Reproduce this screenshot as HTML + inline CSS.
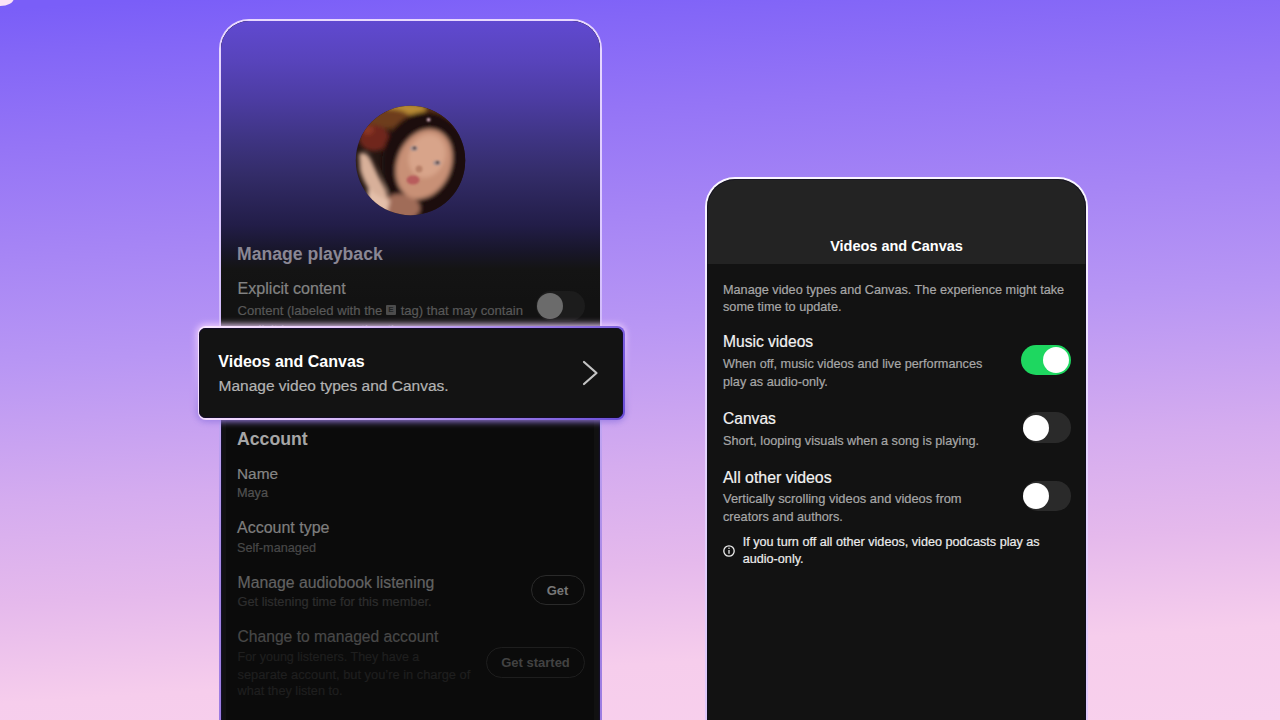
<!DOCTYPE html>
<html><head><meta charset="utf-8">
<style>
html,body{margin:0;padding:0;overflow:hidden;}
body{width:1280px;height:720px;overflow:hidden;position:relative;font-family:"Liberation Sans",sans-serif;
background:linear-gradient(176.5deg,#7a5ef8 1.1%,#8366f7 6.7%,#9474f6 18%,#b896f4 45.6%,#d5acef 63.1%,#e5b9ec 75.6%,#f6cdec 88.1%,#f8d0ec 100%);}
.t{position:absolute;white-space:nowrap;-webkit-text-stroke:0.2px currentColor;}
.b{-webkit-text-stroke:0;}
.tr{position:absolute;}
.kn{position:absolute;border-radius:50%;}
.abs{position:absolute;}
</style></head><body>
<div class="abs" style="left:-14px;top:-10px;width:28px;height:16px;border-radius:50%;background:#fbe2f6;filter:blur(0.6px)"></div>
<div class="abs" style="left:219px;top:19px;width:383px;height:760px;border-radius:30px;background:linear-gradient(180deg,#e8d8ff 0%,#dcc8ff 30%,#c4aaf4 50%,#a484e4 75%,#9878e0 100%);"></div>
<div class="abs" style="left:221px;top:21px;width:379px;height:756px;border-radius:28px;background:#111111;box-shadow:inset 0 0 0 1.2px rgba(24,14,64,0.55);overflow:hidden;">
<div class="abs" style="left:0;top:0;width:379px;height:400px;background:linear-gradient(180deg,#6049d0 0px,#5844bc 39px,#4c3ca2 79px,#3e3482 119px,#332c68 154px,#221d48 204px,#18162a 230px,#141414 248px,#121212 280px);"></div>
<div class="abs" style="left:5px;top:399px;width:368px;height:400px;background:#0b0b0b;"></div>
</div>
<div class="t b" style="left:237.00px;top:246.40px;font-size:17.6px;line-height:17.6px;color:#8a8794;font-weight:700;">Manage playback</div>
<div class="t" style="left:237.50px;top:280.47px;font-size:16.1px;line-height:16.1px;color:#838383;font-weight:400;">Explicit content</div>
<div class="t" style="left:237.50px;top:303.91px;font-size:13.1px;line-height:13.1px;color:#585858;font-weight:400;">Content (labeled with the <span style="display:inline-block;width:10px;height:10px;background:#4c4c4c;border-radius:1px;vertical-align:2.5px;margin-right:1px;font-size:8px;line-height:10px;text-align:center;color:#222;font-weight:700;-webkit-text-stroke:0">E</span> tag) that may contain</div>
<div class="t" style="left:237.50px;top:322.91px;font-size:13.1px;line-height:13.1px;color:#585858;font-weight:400;">explicit language or other themes.</div>
<div class="tr" style="left:536px;top:291px;width:49px;height:30px;border-radius:15.0px;background:#1c1c1c"></div>
<div class="kn" style="left:537.00px;top:293.00px;width:26px;height:26px;background:#6b6b6b"></div>
<div class="t b" style="left:237.00px;top:431.32px;font-size:17.7px;line-height:17.7px;color:#a6a6a6;font-weight:700;">Account</div>
<div class="t" style="left:237.00px;top:465.86px;font-size:15.4px;line-height:15.4px;color:#858585;font-weight:400;">Name</div>
<div class="t" style="left:237.00px;top:486.55px;font-size:12.7px;line-height:12.7px;color:#525252;font-weight:400;">Maya</div>
<div class="t" style="left:237.00px;top:519.76px;font-size:16px;line-height:16px;color:#7e7e7e;font-weight:400;">Account type</div>
<div class="t" style="left:237.00px;top:541.75px;font-size:12.7px;line-height:12.7px;color:#484848;font-weight:400;">Self-managed</div>
<div class="t" style="left:237.50px;top:575.33px;font-size:15.8px;line-height:15.8px;color:#626262;font-weight:400;">Manage audiobook listening</div>
<div class="t" style="left:237.50px;top:596.16px;font-size:12.8px;line-height:12.8px;color:#2e2e2e;font-weight:400;">Get listening time for this member.</div>
<div class="abs" style="left:531px;top:575px;width:52px;height:28px;border:1px solid #2a2a2a;border-radius:15px"></div>
<div class="t b" style="left:257.50px;width:600px;text-align:center;top:584.00px;font-size:13px;line-height:13px;color:#777777;font-weight:700;">Get</div>
<div class="t" style="left:237.50px;top:628.95px;font-size:15.65px;line-height:15.65px;color:#484848;font-weight:400;">Change to managed account</div>
<div class="t" style="left:237.50px;top:650.82px;font-size:12.5px;line-height:12.5px;color:#1f1f1f;font-weight:400;">For young listeners. They have a</div>
<div class="t" style="left:237.50px;top:668.62px;font-size:12.85px;line-height:12.85px;color:#1f1f1f;font-weight:400;">separate account, but you’re in charge of</div>
<div class="t" style="left:237.50px;top:685.25px;font-size:12.7px;line-height:12.7px;color:#1f1f1f;font-weight:400;">what they listen to.</div>
<div class="abs" style="left:486px;top:647px;width:97px;height:29px;border:1px solid #1e1e1e;border-radius:16px"></div>
<div class="t b" style="left:235.50px;width:600px;text-align:center;top:656.00px;font-size:13px;line-height:13px;color:#424242;font-weight:700;">Get started</div>
<svg class="abs" style="left:354.5px;top:104.5px" width="111" height="111" viewBox="1 1 111 111">
<defs><clipPath id="cp"><circle cx="56.5" cy="56.5" r="54.7"/></clipPath>
<filter id="bl" x="-20%" y="-20%" width="140%" height="140%"><feGaussianBlur stdDeviation="2"/></filter>
<filter id="bl2" x="-20%" y="-20%" width="140%" height="140%"><feGaussianBlur stdDeviation="0.9"/></filter></defs>
<g clip-path="url(#cp)">
<rect width="113" height="113" fill="#241612"/>
<g filter="url(#bl)">
<rect x="0" y="0" width="113" height="26" fill="#5a3018"/>
<ellipse cx="52" cy="5" rx="20" ry="6" fill="#b88a36"/>
<ellipse cx="34" cy="14" rx="22" ry="9" fill="#6e3e1e"/>
<ellipse cx="20" cy="34" rx="15" ry="13" fill="#70281e"/>
<ellipse cx="14" cy="26" rx="6" ry="5" fill="#8a3424"/>
<ellipse cx="72" cy="60" rx="44" ry="52" fill="#1a100e"/>
<ellipse cx="46" cy="104" rx="20" ry="14" fill="#a06c58"/>
<ellipse cx="70" cy="60" rx="27" ry="36" fill="#c89076" transform="rotate(22 70 60)"/>
<ellipse cx="73" cy="52" rx="18" ry="22" fill="#d8a48a" transform="rotate(22 73 52)"/>
<path d="M36 40 Q 50 26 62 28 Q 52 34 42 52 Z" fill="#1a100e"/>
<path d="M5 50 Q 12 46 17 56 Q 24 72 32 86 Q 36 96 30 100 Q 12 88 6 66 Z" fill="#d8b09a"/>
<path d="M14 84 Q 24 94 36 96 L 32 113 L 12 113 Z" fill="#e4c0aa"/>
</g>
<g filter="url(#bl2)">
<ellipse cx="60" cy="44.5" rx="3.8" ry="2.4" fill="#a89290"/><circle cx="60.5" cy="44" r="1.5" fill="#3a2a28"/>
<ellipse cx="83" cy="59" rx="3.8" ry="2.4" fill="#a89290"/><circle cx="83.5" cy="58.5" r="1.5" fill="#3a2a28"/>
<ellipse cx="65" cy="65" rx="3.5" ry="3.5" fill="#b88068"/>
<ellipse cx="59" cy="76" rx="6.5" ry="4.5" fill="#b85c5c"/>
<circle cx="74.6" cy="15.7" r="1.8" fill="#f0c8d8"/>
</g>
</g></svg>
<div class="abs" style="left:196px;top:324px;width:430px;height:98px;border-radius:10px;background:linear-gradient(180deg,#f4d4ff 0%,#c8a8f4 55%,#9478e0 100%);filter:blur(3px);opacity:0.9"></div>
<div class="abs" style="left:197.6px;top:326.2px;width:427.6px;height:93.4px;border-radius:8px;background:linear-gradient(115deg,#fae6ff 0%,#e6cafc 30%,#a484ea 68%,#6a4ed8 100%);"></div>
<div class="abs" style="left:199.4px;top:328px;width:424px;height:89.8px;border-radius:6.5px;background:#131313;box-shadow:inset 0 0 0 0.8px rgba(20,10,50,0.9);"></div>
<div class="t b" style="left:218.30px;top:353.96px;font-size:16px;line-height:16px;color:#ffffff;font-weight:700;">Videos and Canvas</div>
<div class="t" style="left:218.50px;top:377.88px;font-size:15.5px;line-height:15.5px;color:#b3b3b3;font-weight:400;">Manage video types and Canvas.</div>
<svg class="abs" style="left:578px;top:356px" width="26" height="34" viewBox="0 0 26 34"><path d="M6 6 L18.5 17 L6 28" fill="none" stroke="#c4c4c4" stroke-width="2.2" stroke-linecap="round" stroke-linejoin="round"/></svg>
<div class="abs" style="left:705px;top:177px;width:383px;height:600px;border-radius:30px;background:linear-gradient(180deg,#faf6ff 0%,#f4ecff 15%,#e6d6ff 40%,#dcc4f8 100%);"></div>
<div class="abs" style="left:707.3px;top:179.3px;width:378.4px;height:595px;border-radius:28px;background:linear-gradient(180deg,#232323 0px,#232323 84.7px,#121212 84.7px);box-shadow:inset 0 0 0 1px rgba(14,10,34,0.6);overflow:hidden"></div>
<div class="t b" style="left:596.50px;width:600px;text-align:center;top:238.73px;font-size:14.5px;line-height:14.5px;color:#ffffff;font-weight:700;">Videos and Canvas</div>
<div class="t" style="left:723.00px;top:283.95px;font-size:12.7px;line-height:12.7px;color:#a7a7a7;font-weight:400;">Manage video types and Canvas. The experience might take</div>
<div class="t" style="left:723.00px;top:300.75px;font-size:12.7px;line-height:12.7px;color:#a7a7a7;font-weight:400;">some time to update.</div>
<div class="t" style="left:723.00px;top:333.99px;font-size:15.6px;line-height:15.6px;color:#f2f2f2;font-weight:400;">Music videos</div>
<div class="t" style="left:723.00px;top:357.65px;font-size:12.7px;line-height:12.7px;color:#a7a7a7;font-weight:400;">When off, music videos and live performances</div>
<div class="t" style="left:723.00px;top:375.65px;font-size:12.7px;line-height:12.7px;color:#a7a7a7;font-weight:400;">play as audio-only.</div>
<div class="tr" style="left:1021px;top:344.5px;width:50px;height:30.5px;border-radius:15.25px;background:#1ed760"></div>
<div class="kn" style="left:1043.30px;top:346.80px;width:26px;height:26px;background:#ffffff"></div>
<div class="t" style="left:723.00px;top:410.99px;font-size:15.6px;line-height:15.6px;color:#f2f2f2;font-weight:400;">Canvas</div>
<div class="t" style="left:723.00px;top:434.75px;font-size:12.7px;line-height:12.7px;color:#a7a7a7;font-weight:400;">Short, looping visuals when a song is playing.</div>
<div class="tr" style="left:1023px;top:412px;width:48px;height:30.5px;border-radius:15.25px;background:#2a2a2a"></div>
<div class="kn" style="left:1023.40px;top:414.60px;width:26px;height:26px;background:#ffffff"></div>
<div class="t" style="left:723.00px;top:469.94px;font-size:15.9px;line-height:15.9px;color:#f2f2f2;font-weight:400;">All other videos</div>
<div class="t" style="left:723.00px;top:493.28px;font-size:12.9px;line-height:12.9px;color:#a7a7a7;font-weight:400;">Vertically scrolling videos and videos from</div>
<div class="t" style="left:723.00px;top:510.55px;font-size:12.7px;line-height:12.7px;color:#a7a7a7;font-weight:400;">creators and authors.</div>
<div class="tr" style="left:1023px;top:481.4px;width:48px;height:29.400000000000034px;border-radius:14.700000000000017px;background:#2a2a2a"></div>
<div class="kn" style="left:1023.40px;top:482.60px;width:26px;height:26px;background:#ffffff"></div>
<svg class="abs" style="left:721.7px;top:543.7px" width="14" height="14" viewBox="0 0 14 14"><circle cx="7" cy="7" r="5.2" fill="none" stroke="#eeeeee" stroke-width="1.3"/><line x1="7" y1="6" x2="7" y2="9.8" stroke="#eeeeee" stroke-width="1.3"/><circle cx="7" cy="4.2" r="0.8" fill="#eeeeee"/></svg>
<div class="t" style="left:742.70px;top:536.29px;font-size:12.65px;line-height:12.65px;color:#ececec;font-weight:400;">If you turn off all other videos, video podcasts play as</div>
<div class="t" style="left:742.70px;top:553.49px;font-size:12.65px;line-height:12.65px;color:#ececec;font-weight:400;">audio-only.</div>
</body></html>
